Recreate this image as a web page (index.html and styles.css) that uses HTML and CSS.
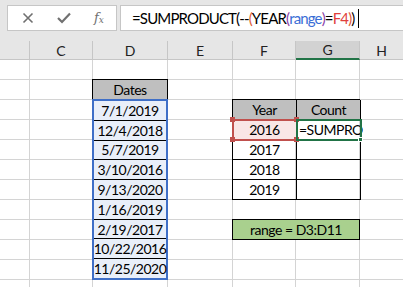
FILE: index.html
```html
<!DOCTYPE html>
<html>
<head>
<meta charset="utf-8">
<link rel="stylesheet" href="styles.css">
</head>
<body>
<div class="fbar">
  <div class="btnbox">
    <svg class="ic" width="12" height="12" viewBox="0 0 12 12"><path d="M1.5 1.5 L10.5 10.5 M10.5 1.5 L1.5 10.5" stroke="#707070" stroke-width="1.6" fill="none"/></svg>
    <svg class="ic" width="14" height="12" viewBox="0 0 14 12"><path d="M1 6 L5 10 L13 1.5" stroke="#707070" stroke-width="2.2" fill="none"/></svg>
    <span class="fx">f<sub>x</sub></span>
  </div>
  <div class="formula"><span class="k">=SUMPRODUCT(--</span><span class="o">(</span><span class="k">YEAR</span><span class="p">(</span><span class="b">range</span><span class="p">)</span><span class="k">=</span><span class="r">F4</span><span class="o">)</span><span class="k">)</span><span class="caret"></span></div>
</div>
<div class="heads">
  <div class="h"></div>
  <div class="h">C</div>
  <div class="h">D</div>
  <div class="h">E</div>
  <div class="h">F</div>
  <div class="h sel">G</div>
  <div class="h last">H</div>
</div>
<div class="sheet">
  <div class="col c1"></div>
  <div class="col c2"></div>
  <div class="col c3"></div>
  <div class="col c4"></div>
  <div class="col c5"></div>
  <div class="col c6"></div>

  <div class="dhead">Dates</div>
  <div class="dates">
    <div class="d">7/1/2019</div>
    <div class="d">12/4/2018</div>
    <div class="d">5/7/2019</div>
    <div class="d">3/10/2016</div>
    <div class="d">9/13/2020</div>
    <div class="d">1/16/2019</div>
    <div class="d">2/19/2017</div>
    <div class="d">10/22/2016</div>
    <div class="d">11/25/2020</div>
  </div>

  <div class="ytab">
    <div class="yc th">Year</div>
    <div class="yc th">Count</div>
    <div class="yc f4">2016<i class="hd tl"></i><i class="hd tr"></i><i class="hd bl"></i><i class="hd br"></i></div>
    <div class="yc g4"><span class="clip">=SUMPRO</span><i class="gh"></i></div>
    <div class="yc">2017</div>
    <div class="yc"></div>
    <div class="yc">2018</div>
    <div class="yc"></div>
    <div class="yc">2019</div>
    <div class="yc"></div>
  </div>

  <div class="rng">range = D3:D11</div>
</div>
</body>
</html>
```

FILE: styles.css
```css
html, body {
  margin: 0;
  padding: 0;
  background: #fff;
  overflow: hidden;
}
body {
  width: 403px;
  height: 287px;
  font-family: Lato, "Open Sans", sans-serif;
  color: #000;
}
.fbar {
  height: 38px;
  background: #e6e6e6;
  display: flex;
  align-items: flex-start;
  padding: 5px 0 0 7px;
  box-sizing: border-box;
  gap: 3px;
}
.btnbox {
  width: 110px;
  height: 26px;
  box-sizing: border-box;
  border: 1px solid #c6c6c6;
  background: #fff;
  display: flex;
  align-items: center;
  padding-left: 14px;
  gap: 23px;
}
.ic { display: block; }
.fx {
  font-family: "DejaVu Serif", "Liberation Serif", serif;
  font-style: italic;
  font-size: 13px;
  color: #707070;
  line-height: 1;
}
.fx sub { font-size: 9px; vertical-align: -1px; }
.formula {
  flex: 1;
  height: 26px;
  box-sizing: border-box;
  border: 1px solid #c6c6c6;
  border-right: none;
  background: #fff;
  display: flex;
  align-items: center;
  padding-left: 11px;
  font-size: 15px;
  letter-spacing: -0.85px;
  white-space: nowrap;
}
.k { color: #000; }
.o { color: #e0613a; }
.p { color: #8e3fa8; }
.b { color: #3b6ed6; }
.r { color: #e0403c; }
.caret {
  display: inline-block;
  width: 1px;
  height: 19px;
  background: #000;
  margin-left: 3px;
}
.heads {
  display: grid;
  grid-template-columns: 30px 63px 75px 65px 63px 64px 1fr;
  height: 22px;
  background: #e6e6e6;
}
.h {
  border-right: 1px solid #c6c6c6;
  border-bottom: 1px solid #c6c6c6;
  font-size: 14px;
  color: #222;
  display: flex;
  align-items: center;
  justify-content: center;
  margin-top: 3px;
  height: 18px;
}
.h.last { border-right: none; }
.h.sel {
  background: #d2d2d2;
  border-bottom: 2px solid #217346;
  height: 17px;
}
.sheet {
  display: grid;
  grid-template-columns: 30px 63px 75px 65px 63px 64px 1fr;
  grid-template-rows: repeat(12, 20px);
  background: repeating-linear-gradient(to bottom, transparent 0 19px, #d4d4d4 19px 20px);
  font-size: 14px;
  letter-spacing: -0.5px;
}
.col {
  grid-row: 1 / 13;
  border-right: 1px solid #d4d4d4;
}
.c1 { grid-column: 1; }
.c2 { grid-column: 2; }
.c3 { grid-column: 3; }
.c4 { grid-column: 4; }
.c5 { grid-column: 5; }
.c6 { grid-column: 6; }

.dhead {
  grid-column: 3;
  grid-row: 2;
  margin: -1px 0 0 -1px;
  background: #bfbfbf;
  border: 1px solid #000;
  display: flex;
  align-items: center;
  justify-content: center;
  z-index: 1;
}
.dates {
  grid-column: 3;
  grid-row: 3 / 12;
  margin: -1px 0 0 -1px;
  border: 2px solid #3f6fc7;
  background: #e9eff9;
  display: flex;
  flex-direction: column;
  z-index: 2;
}
.d {
  flex: 1;
  display: flex;
  align-items: center;
  justify-content: center;
  border-bottom: 1px solid #000;
}
.d:last-child { border-bottom: none; }

.ytab {
  grid-column: 5 / 7;
  grid-row: 3 / 8;
  margin: -1px 0 0 -1px;
  display: grid;
  grid-template-columns: 64px 64px;
  grid-template-rows: repeat(5, 20px);
  border-left: 1px solid #000;
  border-top: 1px solid #000;
  z-index: 1;
}
.yc {
  border-right: 1px solid #000;
  border-bottom: 1px solid #000;
  display: flex;
  align-items: center;
  justify-content: center;
  position: relative;
  line-height: 1;
}
.th { background: #bfbfbf; }
.f4 {
  background: #f9e6e6;
  outline: 2px solid #c0504d;
  outline-offset: -1px;
  z-index: 2;
  border-color: #c0504d;
}
.hd {
  position: absolute;
  width: 5px;
  height: 5px;
  background: #c0504d;
}
.tl { left: -3px; top: -3px; }
.tr { right: -3px; top: -3px; }
.bl { left: -3px; bottom: -3px; }
.br { right: -3px; bottom: -3px; }
.g4 {
  justify-content: flex-start;
  z-index: 2;
  outline: 2px solid #217346;
  outline-offset: -1px;
  border-color: #217346;
}
.clip {
  display: block;
  white-space: nowrap;
  padding-left: 2px;
}
.gh {
  position: absolute;
  right: -3px;
  bottom: -3px;
  width: 5px;
  height: 5px;
  background: #217346;
  border: 1px solid #fff;
  box-sizing: border-box;
}
.rng {
  grid-column: 5 / 7;
  grid-row: 9;
  margin: -1px 0 0 -1px;
  background: #a9d08e;
  border: 1px solid #000;
  display: flex;
  align-items: center;
  justify-content: center;
  z-index: 1;
}
```
